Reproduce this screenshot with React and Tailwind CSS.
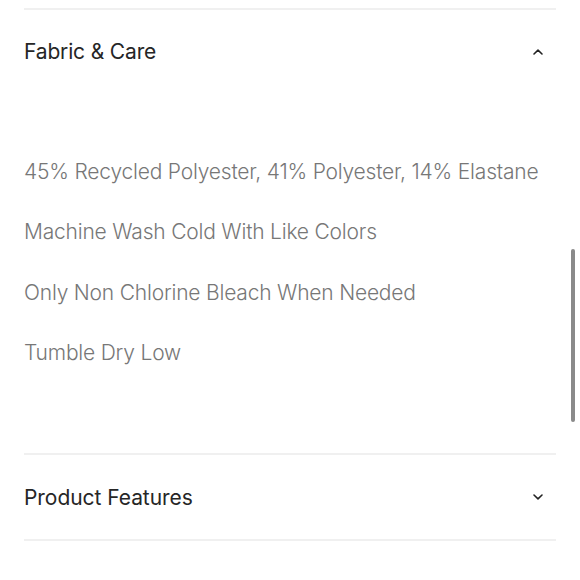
import React from "react";

const ChevronUp = () => (
  <svg width="12" height="8" viewBox="0 0 12 8" fill="none">
    <path d="M2 6L6 2.2L10 6" stroke="#222" strokeWidth="1.6" strokeLinecap="round" strokeLinejoin="round" />
  </svg>
);

const ChevronDown = () => (
  <svg width="12" height="8" viewBox="0 0 12 8" fill="none">
    <path d="M2 2L6 5.8L10 2" stroke="#222" strokeWidth="1.6" strokeLinecap="round" strokeLinejoin="round" />
  </svg>
);

const careLines = [
  "45% Recycled Polyester, 41% Polyester, 14% Elastane",
  "Machine Wash Cold With Like Colors",
  "Only Non Chlorine Bleach When Needed",
  "Tumble Dry Low",
];

export default function App() {
  return (
    <div className="relative w-[580px] h-[580px] overflow-hidden bg-white font-['Inter',sans-serif]">
      <div className="pt-[8px] pl-[24px] pr-[24px]">
        {/* Fabric & Care, open */}
        <section className="border-t-2 border-[#f0f0f0]">
          <div className="h-[84px] flex items-center justify-between">
            <h3 className="text-[21px] text-[#262626] tracking-[-0.15px]">Fabric &amp; Care</h3>
            <span className="mr-[12px] flex items-center">
              <ChevronUp />
            </span>
          </div>
          <div className="pt-[48px] pb-[70px]">
            {careLines.map((line) => (
              <p key={line} className="text-[21px] leading-[60.33px] text-[#777] font-light tracking-[-0.2px]">
                {line}
              </p>
            ))}
          </div>
        </section>

        {/* Product Features, closed */}
        <section className="border-t-2 border-b-2 border-[#f0f0f0]">
          <div className="h-[84px] flex items-center justify-between">
            <h3 className="text-[21px] text-[#262626] tracking-[-0.05px]">Product Features</h3>
            <span className="mr-[12px] flex items-center">
              <ChevronDown />
            </span>
          </div>
        </section>
      </div>

      {/* scroll indicator */}
      <div className="absolute left-[571px] top-[249px] w-[4px] h-[173px] rounded-full bg-[#8a8a8a]" />
    </div>
  );
}
